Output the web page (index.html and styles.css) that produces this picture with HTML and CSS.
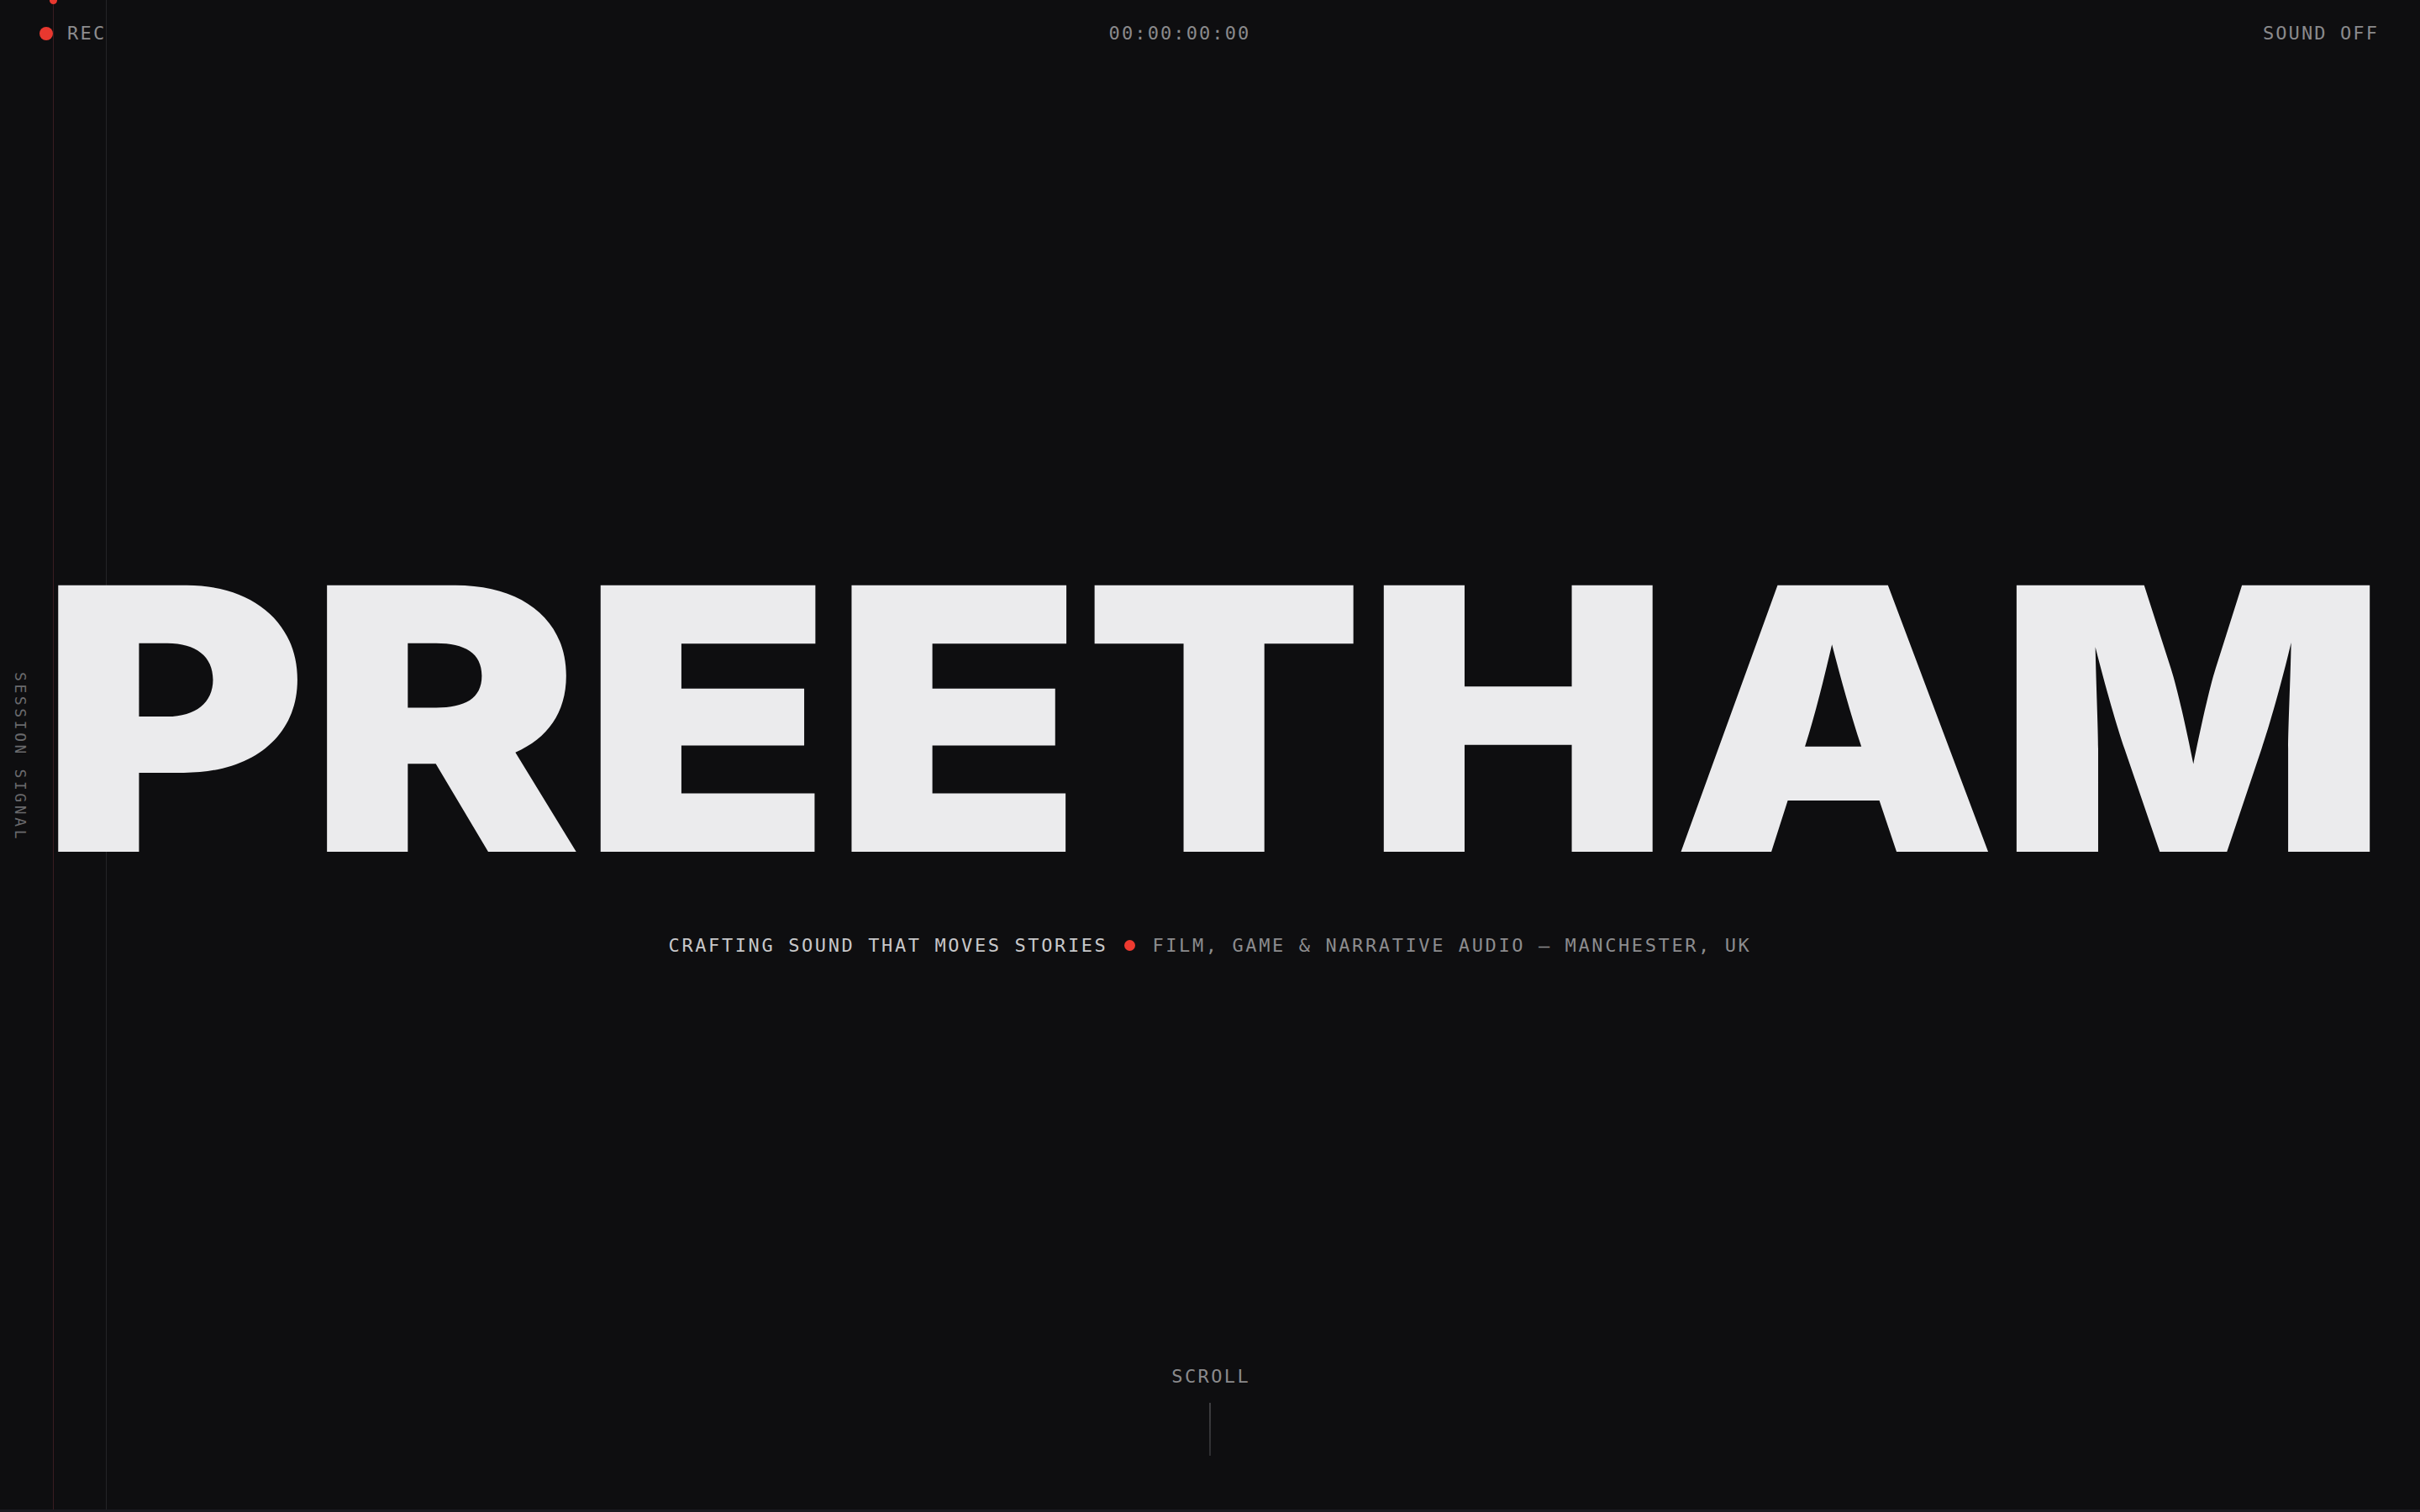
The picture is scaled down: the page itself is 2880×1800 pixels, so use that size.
FILE: index.html
```html
<!DOCTYPE html>
<html lang="en">
<head>
<meta charset="utf-8">
<title>Preetham — Sound</title>
<link rel="stylesheet" href="styles.css">
</head>
<body>
<div class="page">
  <div class="playhead"><span class="playhead-head"></span></div>
  <div class="guide"></div>
  <div class="side-label">SESSION SIGNAL</div>

  <header class="topbar">
    <div class="rec"><span class="rec-dot"></span><span>REC</span></div>
    <div class="timecode">00:00:00:00</div>
    <div class="sound">SOUND OFF</div>
  </header>

  <main class="hero">
    <h1 class="title"><span class="title-inner">PREETHAM</span></h1>
    <p class="tagline">
      <span class="tag-main">CRAFTING SOUND THAT MOVES STORIES</span>
      <span class="tag-dot"></span>
      <span class="tag-sub">FILM, GAME &amp; NARRATIVE AUDIO — MANCHESTER, UK</span>
    </p>
  </main>

  <footer class="scroll">
    <span class="scroll-label">SCROLL</span>
    <span class="scroll-line"></span>
  </footer>

  <div class="bottom-bar"></div>
</div>
</body>
</html>
```

FILE: styles.css
```css
* { box-sizing: border-box; }

html, body {
  margin: 0;
  padding: 0;
  background: #0e0e10;
}

.page {
  position: relative;
  height: 100vh;
  overflow: hidden;
  display: flex;
  flex-direction: column;
  background: #0e0e10;
  font-family: "DejaVu Sans Mono", "Liberation Mono", monospace;
  color: #8a8a8c;
}

.playhead {
  position: absolute;
  top: 0;
  bottom: 0;
  left: 63px;
  width: 1px;
  background: #3a1d21;
}

.playhead-head {
  position: absolute;
  top: -4px;
  left: -4px;
  width: 9px;
  height: 9px;
  border-radius: 50%;
  background: #e8382f;
}

.guide {
  position: absolute;
  top: 0;
  bottom: 0;
  left: 126px;
  width: 1px;
  background: #242427;
}

.side-label {
  position: absolute;
  left: 15px;
  top: 800px;
  writing-mode: vertical-rl;
  font-size: 18px;
  line-height: 18px;
  letter-spacing: 3.6px;
  color: #6a6a6d;
}

.topbar {
  display: grid;
  grid-template-columns: 1fr auto 1fr;
  align-items: center;
  padding: 29px 49px 0 47px;
  font-size: 22px;
  line-height: 22px;
  letter-spacing: 2.3px;
}

.rec {
  display: flex;
  align-items: center;
  gap: 17px;
  color: #8c8c8e;
}

.rec-dot {
  width: 16px;
  height: 16px;
  border-radius: 50%;
  background: #e8382f;
}

.timecode {
  letter-spacing: 2.1px;
  color: #8a8a8c;
  margin-right: 70px;
}

.sound {
  justify-self: end;
  letter-spacing: 2.1px;
  color: #8a8a8c;
}

.hero {
  flex: 1;
  display: flex;
  flex-direction: column;
  align-items: center;
  justify-content: center;
  padding-top: 155px;
}

.title {
  margin: 0;
  font-family: "Inter", "Roboto", sans-serif;
  font-weight: 900;
  font-size: 436px;
  line-height: 0.7275;
  letter-spacing: 0;
  color: #ebebed;
}

.title-inner {
  display: inline-block;
  transform: scaleX(1.118);
  margin-left: 10px;
}

.tagline {
  margin: 100px 0 0;
  display: flex;
  align-items: center;
  gap: 20px;
  font-size: 22px;
  line-height: 22px;
  letter-spacing: 2.6px;
}

.tag-main { color: #c8c8ca; }
.tag-sub { color: #8c8c8e; }

.tag-dot {
  width: 13px;
  height: 13px;
  border-radius: 50%;
  background: #ee3a30;
}

.scroll {
  display: flex;
  flex-direction: column;
  align-items: center;
  gap: 20px;
  padding-bottom: 67px;
}

.scroll-label {
  font-size: 22px;
  line-height: 22px;
  letter-spacing: 2.4px;
  margin-right: -2.4px;
  color: #8a8a8c;
}

.scroll-line {
  width: 2px;
  height: 63px;
  background: linear-gradient(#3e3e41, #2e2e31);
}

.bottom-bar {
  position: absolute;
  left: 0;
  right: 0;
  bottom: 0;
  height: 3px;
  background: #1c1c21;
}
```
